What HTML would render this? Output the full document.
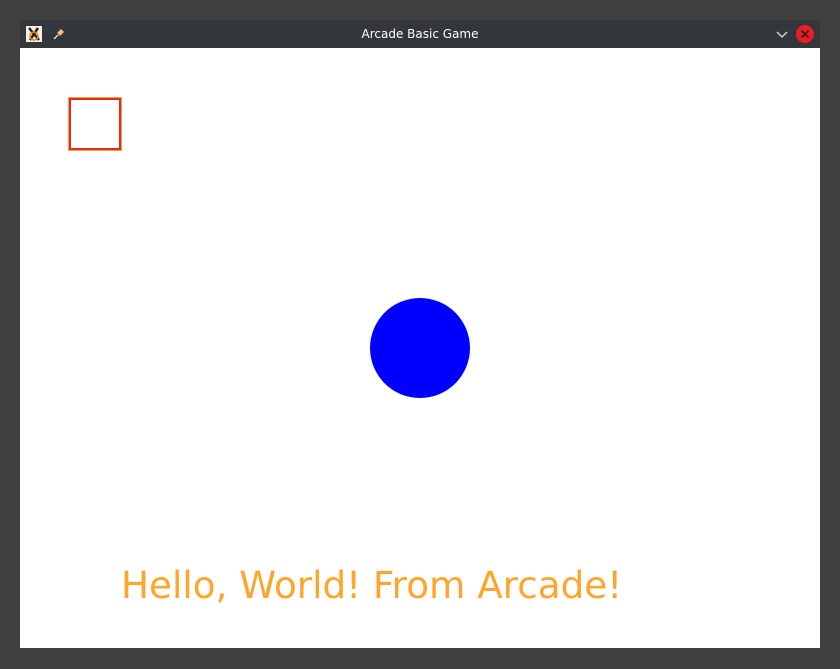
<!DOCTYPE html>
<html><head><meta charset="utf-8"><style>
html,body{margin:0;padding:0;width:840px;height:669px;background:#3f3f3f;overflow:hidden;position:relative}
.bar{position:absolute;left:20px;top:20px;width:800px;height:28px;background:#33373b}
.title{position:absolute;left:0;width:800px;top:0;text-align:center;color:#fff;font:12px "DejaVu Sans","Liberation Sans",sans-serif;line-height:28px}
.content{position:absolute;left:20px;top:48px;width:800px;height:600px;background:#fff}
.sq{position:absolute;left:69px;top:98px;width:48px;height:48px;border:2px solid #e8281e;outline:1px solid #f5a53a}
.circ{position:absolute;left:370px;top:298px;width:100px;height:100px;border-radius:50%;background:#0000ff}
.txt{position:absolute;left:121px;top:563px;color:#ffa52b;font:37.3px "DejaVu Sans",sans-serif;line-height:44px;white-space:nowrap}
</style></head><body>
<div class="bar">
<svg style="position:absolute;left:6px;top:6px" width="16" height="16"><rect width="16" height="16" fill="#f4f0e8"/><path d="M3 2 L13 14 M12 2 L4 14" stroke="#222" stroke-width="2.5"/><circle cx="8" cy="10" r="4" fill="none" stroke="#f08020" stroke-width="1.5"/></svg>
<svg style="position:absolute;left:33px;top:8px" width="12" height="12"><path d="M1 11 L5 7" stroke="#fff" stroke-width="1.2"/><path d="M4 5 L7 8 L11 4 L8 1 Z" fill="#f5c080"/></svg>
<div class="title">Arcade Basic Game</div>
<svg style="position:absolute;left:756px;top:9px" width="12" height="10"><path d="M1 3 L6 8 L11 3" stroke="#ddd" stroke-width="1.3" fill="none"/></svg>
<svg style="position:absolute;left:776px;top:5px" width="18" height="18"><circle cx="9" cy="9" r="9" fill="#ed1c24"/><path d="M5.5 5.5 L12.5 12.5 M12.5 5.5 L5.5 12.5" stroke="#3a1a1a" stroke-width="1.8"/></svg>
</div>
<div class="content"></div>
<div class="sq"></div>
<div class="circ"></div>
<div class="txt">Hello, World! From Arcade!</div>
</body></html>
